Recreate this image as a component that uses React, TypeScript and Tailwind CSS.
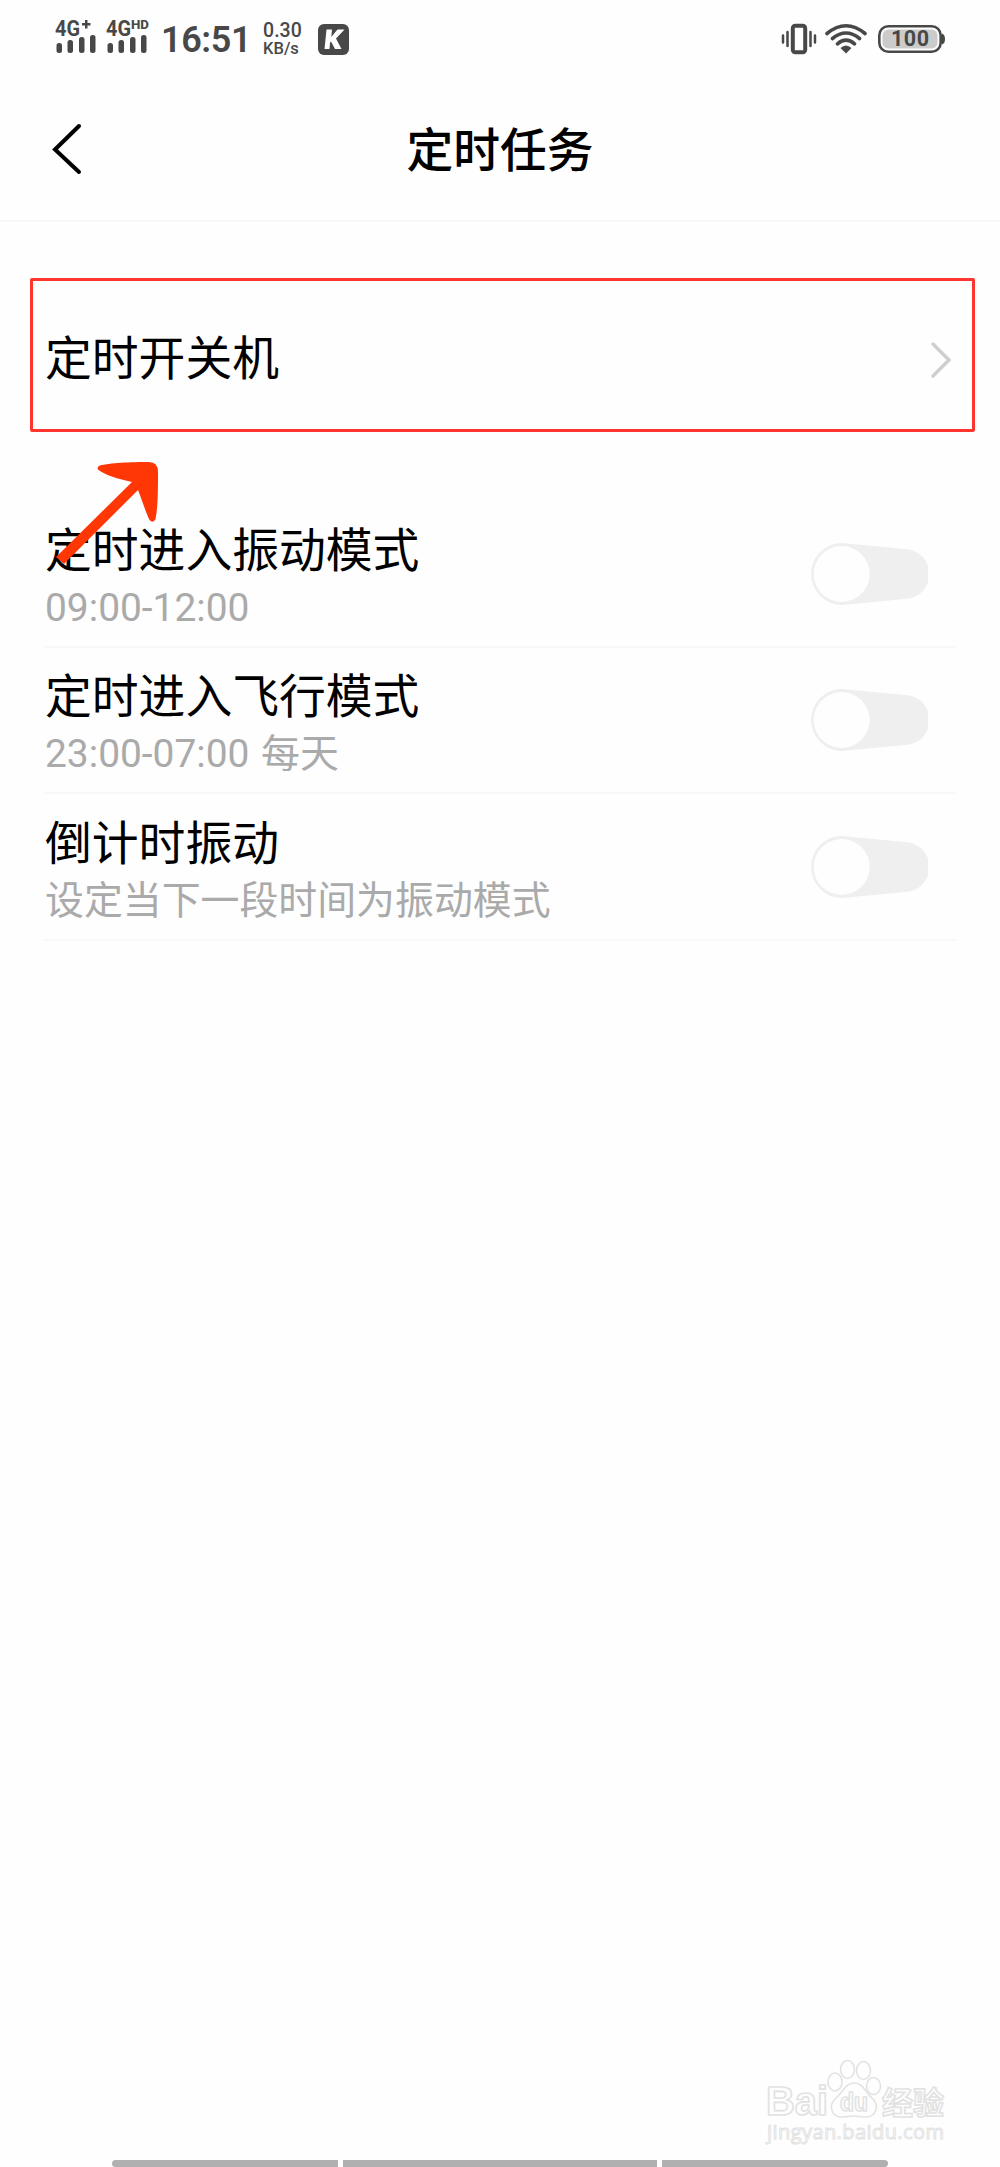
interface SwitchRowProps {
  title: string
  detail: string
}

const tasks: SwitchRowProps[] = [
  { title: '定时进入振动模式', detail: '09:00-12:00' },
  { title: '定时进入飞行模式', detail: '23:00-07:00 每天' },
  { title: '倒计时振动', detail: '设定当下一段时间为振动模式' },
]

function SignalIcon({ suffix }: { suffix: string }) {
  return (
    <svg className="h-[44px] w-[46px] shrink-0" viewBox="0 -8 46 44" fill="#484848">
      <text x="0" y="18" fontSize="22" fontWeight="700" textLength="25" lengthAdjust="spacingAndGlyphs">4G</text>
      {suffix === '+' ? (
        <path d="M27 5h3V2h2.500v3h3v2.500h-3v3H30v-3h-3z" />
      ) : (
        <text x="25" y="11" fontSize="12" fontWeight="800" textLength="18" lengthAdjust="spacingAndGlyphs">{suffix}</text>
      )}
      <rect x="1.5" y="25" width="5.5" height="10" rx="2.5" />
      <rect x="12.5" y="22" width="5.5" height="13" rx="2.5" />
      <rect x="24" y="19" width="5.5" height="16" rx="2.5" />
      <rect x="35" y="17" width="5.5" height="18" rx="2.5" />
    </svg>
  )
}

function VibrateIcon() {
  return (
    <svg className="h-[32px] w-[36px]" viewBox="0 0 36 32" fill="none" stroke="#484848" strokeLinecap="round">
      <rect x="11.8" y="2.8" width="12.4" height="26.4" rx="2.5" strokeWidth="4" />
      <path d="M2 12.5v7M6.5 9v14M29.5 9v14M34 12.5v7" strokeWidth="2.5" />
    </svg>
  )
}

function WifiIcon() {
  return (
    <svg className="h-[32px] w-[42px]" viewBox="0 0 42 32" fill="none" stroke="#484848" strokeWidth="3.6" strokeLinecap="round">
      <path d="M2 10.5Q21 -5 40 10.5M7.5 15.5Q21 4.5 34.5 15.5M12.5 20.8Q21 13.5 29.5 20.8" />
      <path d="M15.5 25Q21 20 26.5 25L21 30.5z" fill="#484848" stroke="none" />
    </svg>
  )
}

function BatteryIcon() {
  return (
    <svg className="h-[28px] w-[68px]" viewBox="0 0 68 28">
      <rect x="1.3" y="1.3" width="61.4" height="25.4" rx="9" fill="none" stroke="#484848" strokeWidth="2.6" />
      <rect x="4.5" y="4.5" width="55" height="19" rx="6" fill="#cbcbcb" />
      <path d="M64 8.5q3 1 3 5.5t-3 5.5z" fill="#484848" />
      <text x="13" y="21" fontSize="21.5" fontWeight="700" fill="#484848" textLength="38">100</text>
    </svg>
  )
}

function StatusBar() {
  return (
    <div className="flex h-[78px] justify-between pl-[55px] pr-[54px] text-[#484848]">
      <div className="flex">
        <div className="flex gap-[5px] pt-[10px]">
          <SignalIcon suffix="+" />
          <SignalIcon suffix="HD" />
        </div>
        <span className="ml-[9px] mt-[20px] text-[36px] leading-[40px] font-semibold tracking-[-0.4px]">16:51</span>
        <div className="ml-[12px] mt-[21px] w-[40px] font-medium">
          <p className="text-[19.5px] leading-[19px]">0.30</p>
          <p className="text-[16.5px] leading-[18px]">KB/s</p>
        </div>
        <svg className="ml-[15px] mt-[24px] size-[31px]" viewBox="0 0 31 31">
          <rect width="31" height="31" rx="6" fill="#484848" />
          <path d="M8.500 5.500h5.500l-.7 7.500 6.200-7.500H26.500l-8.500 9L23.500 25h-6.500l-4-7.500-1 1.300L11.500 25H6.500z" fill="#fff" />
        </svg>
      </div>
      <div className="flex">
        <div className="mt-[23px]"><VibrateIcon /></div>
        <div className="ml-[8px] mt-[23px]"><WifiIcon /></div>
        <div className="ml-[11px] mt-[25px]"><BatteryIcon /></div>
      </div>
    </div>
  )
}

function Switch() {
  return (
    <svg className="mt-px h-[62px] w-[117px]" viewBox="0 0 117 62">
      <path d="M31 0L93.5 6A25 25 0 0 1 93.5 56L31 62A31 31 0 0 1 31 0z" fill="#efefef" />
      <circle cx="30.7" cy="31" r="28" fill="#fefefe" />
    </svg>
  )
}

function SwitchRow({ title, detail }: SwitchRowProps) {
  return (
    <div className="flex h-[146.5px] items-center justify-between border-b-2 border-[#f8f8f8] pr-[27px]">
      <div className="pt-[9px]">
        <h2 className="text-[46.8px] leading-[60px] text-black">{title}</h2>
        <p className="text-[38.9px] leading-[54px] text-[#aaaaaa] [word-spacing:2px]">{detail}</p>
      </div>
      <Switch />
    </div>
  )
}

function Watermark() {
  return (
    <svg className="absolute left-[760px] top-[2054px] h-[96px] w-[192px]" viewBox="0 0 192 96" fill="#fefefe" stroke="#e2e2e2" strokeWidth="1.6">
      <text x="6" y="61" fontSize="40" fontWeight="700" textLength="62" lengthAdjust="spacingAndGlyphs" fontFamily="Liberation Sans">Bai</text>
      <ellipse cx="75" cy="28" rx="7" ry="9" />
      <ellipse cx="87.5" cy="15.5" rx="7" ry="9" />
      <ellipse cx="103.5" cy="16.5" rx="7" ry="9" />
      <ellipse cx="113.5" cy="32" rx="7" ry="8.5" />
      <path d="M94 29c9 0 11 9 18 15 8 7 4 19-6 19-5 0-8-1-12-1s-8 1-12 1c-11 0-14-12-6-19 7-6 10-15 18-15z" />
      <text x="80" y="57" fontSize="25" fontWeight="700" textLength="28" lengthAdjust="spacingAndGlyphs" fontFamily="Liberation Sans">du</text>
      <text x="122" y="60" fontSize="31" fontWeight="700">经验</text>
      <text x="7" y="85" fontSize="20" textLength="177" strokeWidth="1" fontFamily="Open Sans" fontWeight="400">jingyan.baidu.com</text>
    </svg>
  )
}

export default function App() {
  return (
    <div className="relative flex h-[2167px] w-[1000px] flex-col overflow-hidden bg-[#fefefe] font-['Roboto','Noto_Sans_CJK_SC',sans-serif]">
      <StatusBar />

      <header className="grid h-[144px] grid-cols-3 items-center border-b-2 border-[#f8f8f8]">
        <svg className="ml-[52px] h-[52px] w-[30px]" viewBox="0 0 30 52" fill="none" stroke="#000" strokeWidth="4" strokeLinecap="round">
          <path d="M27 3L3 26.5L27 49" />
        </svg>
        <h1 className="pt-[3px] text-center text-[46.8px] leading-[60px] font-medium text-black">定时任务</h1>
      </header>

      <main className="pt-[56px]">
        <div className="ml-[30px] flex h-[154px] w-[945px] items-center justify-between rounded-[2px] border-3 border-[#ff3530] pr-[20px] pl-[12px]">
          <span className="pt-[7px] text-[46.8px] leading-[60px] text-black">定时开关机</span>
          <svg className="mt-[9px] h-[38px] w-[22px]" viewBox="0 0 22 38" fill="none" stroke="#cfcfcf" strokeWidth="3.5" strokeLinecap="round">
            <path d="M3 3L19 19L3 35" />
          </svg>
        </div>

        <section className="mx-[45px] mt-[69px]">
          {tasks.map((task) => (
            <SwitchRow key={task.title} {...task} />
          ))}
        </section>
      </main>

      <svg className="absolute left-[55px] top-[460px] h-[106px] w-[106px]" viewBox="0 0 106 106" fill="#ff3704">
        <path d="M45 5.5C54 3 76 2 94 2Q103 2 103 12C103 30 103 47 100.5 59Q98 64 94.5 60C91 53 87 40 83 30L9 104L1 97L77 22C63 19 50 15 43.5 10Q41 7 45 5.5z" />
      </svg>

      <Watermark />

      <nav className="mt-auto flex h-[7px] justify-center gap-[5px]">
        <div className="w-[226px] rounded-l-full bg-[#b0b0b0]" />
        <div className="w-[314px] bg-[#b0b0b0]" />
        <div className="w-[226px] rounded-r-full bg-[#b0b0b0]" />
      </nav>
    </div>
  )
}
